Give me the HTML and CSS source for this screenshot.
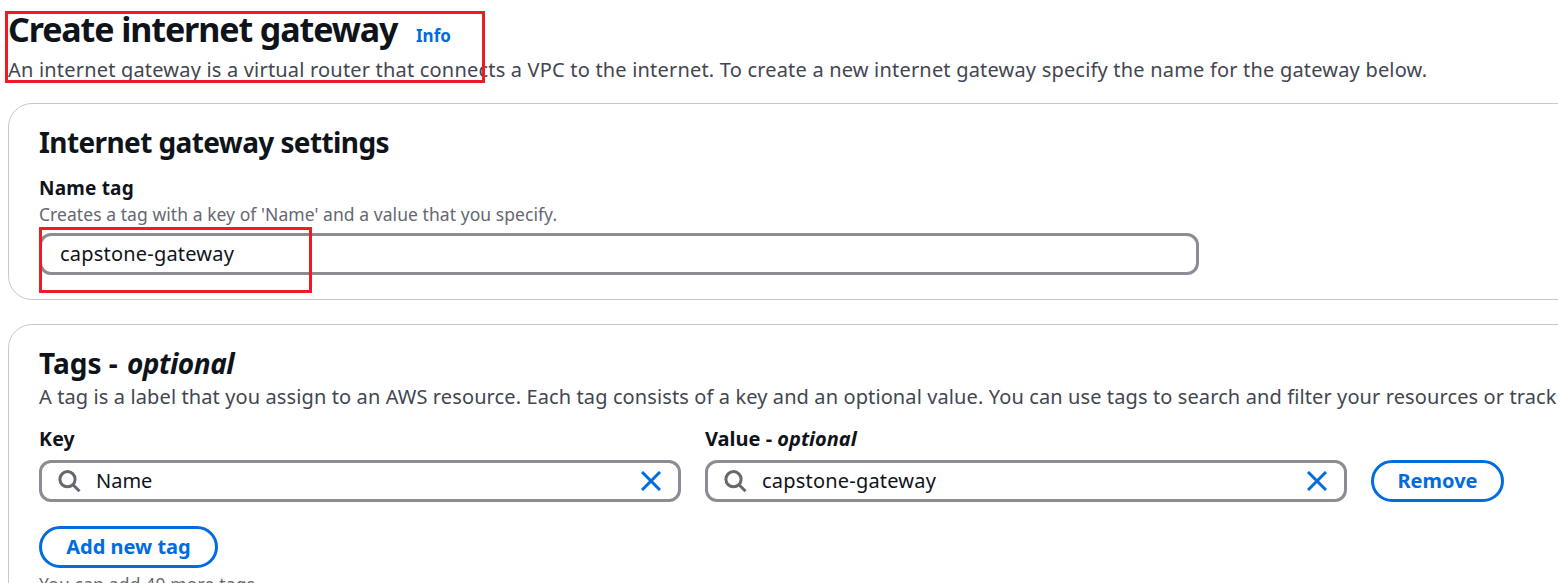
FILE: index.html
```html
<!DOCTYPE html>
<html lang="en">
<head>
<meta charset="utf-8">
<title>Create internet gateway</title>
<link rel="stylesheet" href="styles.css">
</head>
<body>
<main class="page">
  <header class="page-header">
    <div class="title-row"><h1 class="title">Create internet gateway</h1><a class="info">Info</a></div>
    <p class="description page-description">An internet gateway is a virtual router that connects a VPC to the internet. To create a new internet gateway specify the name for the gateway below.</p>
    <span class="highlight highlight-title"></span>
  </header>
  <section class="card settings">
    <h2 class="card-title settings-title">Internet gateway settings</h2>
    <div class="label name-label">Name tag</div>
    <div class="hint name-hint">Creates a tag with a key of 'Name' and a value that you specify.</div>
    <div class="field name-field"><span class="value">capstone-gateway</span><span class="highlight highlight-name"></span></div>
  </section>
  <section class="card tags">
    <h2 class="card-title tags-title"><span>Tags - </span><em class="optional">optional</em></h2>
    <p class="description tags-description">A tag is a label that you assign to an AWS resource. Each tag consists of a key and an optional value. You can use tags to search and filter your resources or track</p>
    <div class="tag-row">
      <div class="column">
        <div class="label key-label">Key</div>
        <div class="field search-field">
          <svg class="search-icon" viewBox="0 0 24 24"><circle cx="10.5" cy="10.2" r="7.6"/><path d="M16 15.7 22.5 22.2"/></svg>
          <span class="value short">Name</span>
          <svg class="clear-icon" viewBox="0 0 20 20"><path d="M1 1l18 18M19 1L1 19"/></svg>
        </div>
      </div>
      <div class="column">
        <div class="label value-label"><span>Value - </span><em class="optional">optional</em></div>
        <div class="field search-field">
          <svg class="search-icon" viewBox="0 0 24 24"><circle cx="10.5" cy="10.2" r="7.6"/><path d="M16 15.7 22.5 22.2"/></svg>
          <span class="value">capstone-gateway</span>
          <svg class="clear-icon" viewBox="0 0 20 20"><path d="M1 1l18 18M19 1L1 19"/></svg>
        </div>
      </div>
      <button class="button remove"><span>Remove</span></button>
    </div>
    <button class="button add"><span>Add new tag</span></button>
    <div class="hint limit">You can add 49 more tags.</div>
  </section>
</main>
</body>
</html>
```
FILE: styles.css
```css
* { box-sizing: border-box; }
body { margin: 0; background: #fff; color: #0f141a; font-family: "Noto Sans", "Open Sans", sans-serif; }
h1, h2, p { margin: 0; }
.page { width: 1558px; height: 583px; overflow: hidden; padding: 9px 0 0 8px; white-space: nowrap; }
.page-header { position: relative; height: 94px; }
.title-row { display: flex; align-items: baseline; height: 47px; line-height: 40px; }
.title { width: 408px; font-size: 34px; font-weight: 700; letter-spacing: -1.1px; }
.info { color: #006ce0; font-size: 17px; font-weight: 700; }
.description { color: #424650; font-size: 20px; line-height: 28px; }
.page-description { letter-spacing: 0.19px; }
.card { width: 1640px; border: 1px solid #c6c6cd; border-radius: 24px; padding: 20px 30px 0; }
.settings { height: 197px; margin-bottom: 24px; }
.tags { height: 320px; }
.card-title { font-size: 28px; font-weight: 700; line-height: 36px; }
.settings-title { letter-spacing: -0.6px; }
.tags-title .optional { margin-left: 2px; letter-spacing: -0.5px; }
.label { font-size: 19px; font-weight: 700; line-height: 24px; letter-spacing: 0.2px; }
.name-label { margin-top: 16px; }
.key-label { font-size: 19.5px; }
.value-label { font-size: 20px; letter-spacing: 0; }
.hint { color: #656871; font-size: 17.5px; line-height: 22px; letter-spacing: 0.06px; }
.name-hint { margin-top: 3px; }
.field { position: relative; display: flex; align-items: center; height: 42px; border: 3px solid #8c8c94; border-radius: 12px; padding: 0 18px; }
.name-field { width: 1160px; margin-top: 8px; }
.value { color: #0f141a; font-size: 20px; line-height: 28px; letter-spacing: 0.2px; }
.value.short { letter-spacing: 0; }
.tags-description { margin-top: 2px; letter-spacing: 0.11px; }
.tag-row { display: flex; align-items: flex-end; gap: 24px; margin-top: 16px; }
.column { width: 642px; }
.search-field { margin-top: 9px; padding: 0 17px 0 15px; }
.search-icon { width: 24px; height: 24px; margin-right: 15px; fill: none; stroke: #656871; stroke-width: 3; }
.clear-icon { width: 20px; height: 20px; margin-left: auto; fill: none; stroke: #006ce0; stroke-width: 3; }
.button { display: flex; align-items: center; justify-content: center; height: 42px; padding: 0; border: 3px solid #006ce0; border-radius: 21px; background: #fff; color: #006ce0; font: 700 20px/28px "Noto Sans", "Open Sans", sans-serif; }
.remove { width: 133px; }
.add { width: 179px; margin-top: 24px; }
.limit { margin-top: 5px; letter-spacing: 0.15px; }
.highlight { position: absolute; border: 3px solid #ed1c24; }
.highlight-title { left: -3px; top: 2px; width: 480px; height: 72px; }
.highlight-name { left: -3px; top: -9px; width: 273px; height: 66px; }
```
